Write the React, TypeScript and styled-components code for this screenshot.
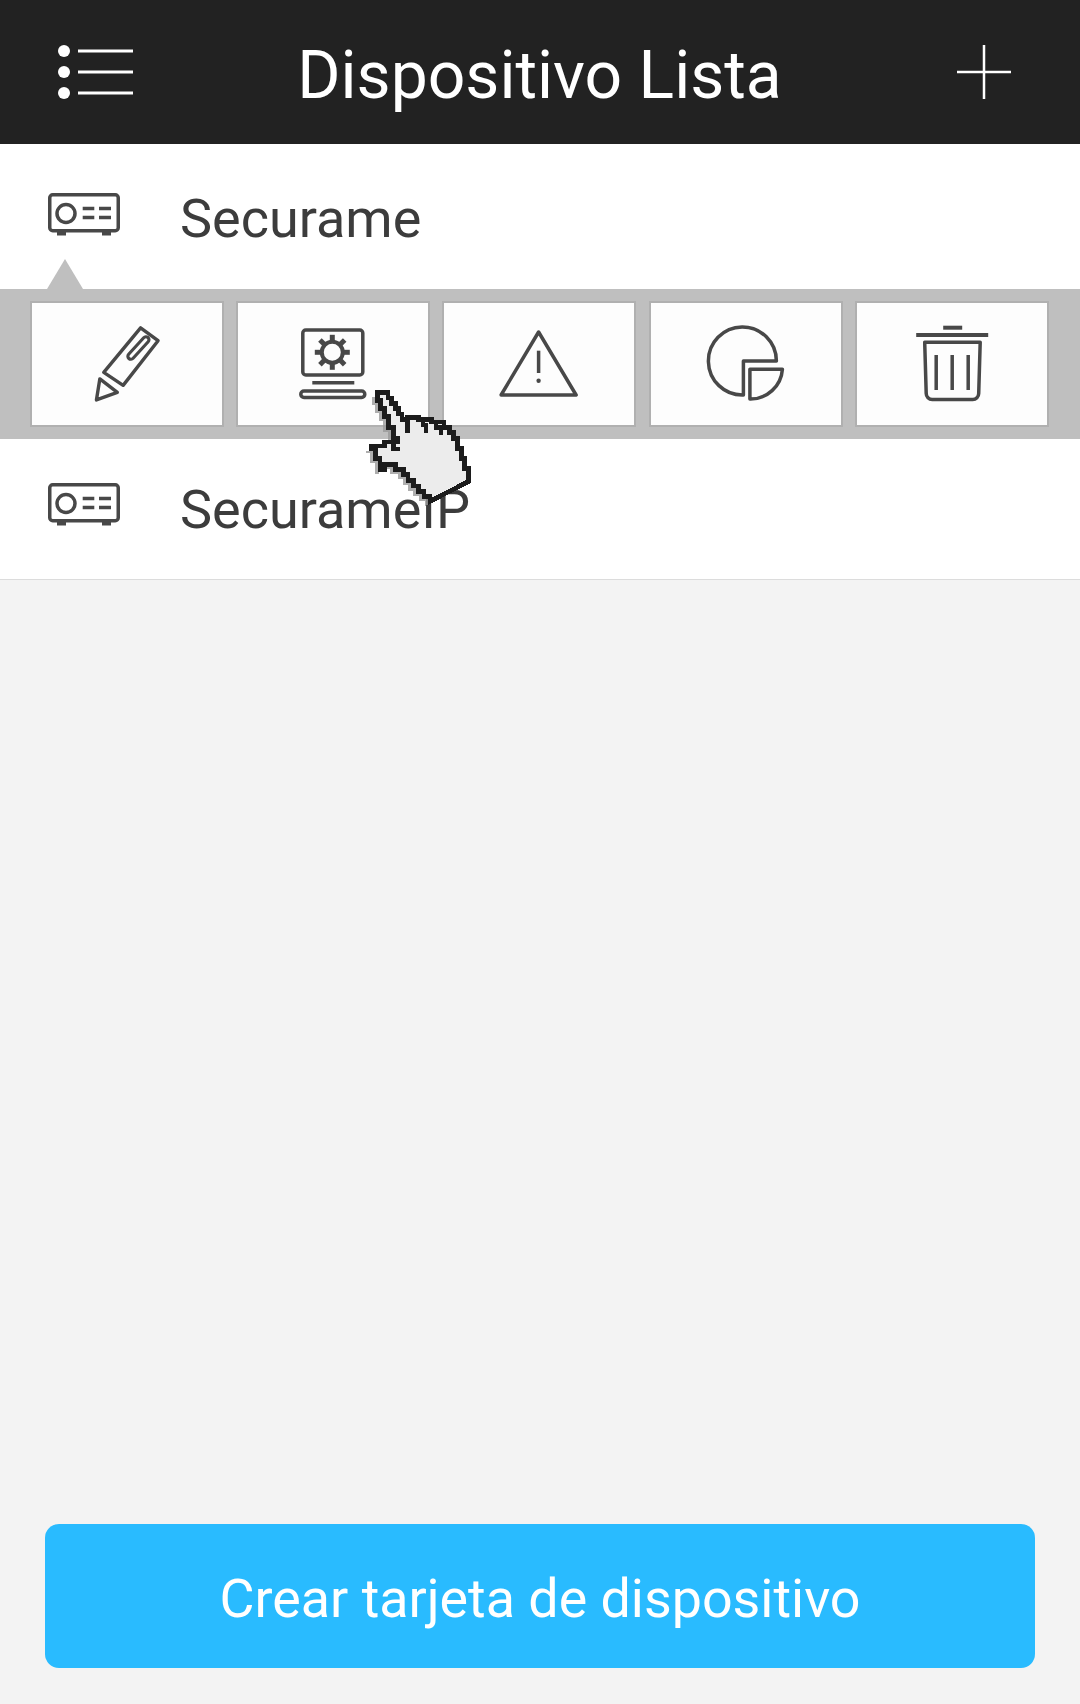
import styled, { createGlobalStyle } from "styled-components";

const GlobalStyle = createGlobalStyle`
  html, body {
    margin: 0;
    padding: 0;
    background: #f3f3f3;
  }
  * {
    box-sizing: border-box;
  }
`;

const gearTeeth = [0, 45, 90, 135, 180, 225, 270, 315];

const HAND_PATH =
  "M82 38 H114 V54 H125 V70 H136 V86 H146 V102 H156 V118 H172 V112 H205 V118 H245 V126 H282 V142 H298 V158 H310 V176 H322 V206 H334 V236 H344 V266 H356 V304 L240 364 V350 H222 V334 H206 V318 H190 V302 H174 V284 H160 V268 H136 V254 H104 V268 H90 V236 H76 V206 H64 V198 H104 V186 H142 V174 H130 V142 H116 V110 H104 V86 H92 V62 H82 Z";

function DeviceIcon() {
  return (
    <DeviceSvg viewBox="0 0 72 44" fill="none" stroke="#484848" strokeWidth="3.5">
      <rect x="1.75" y="1.75" width="68.5" height="36" rx="3" />
      <circle cx="18" cy="20.5" r="9" />
      <path d="M34.7 15.5h11.6M51 15.5h12M34.7 24.5h11.6M51 24.5h12" />
      <path d="M9 40.5h9M54 40.5h9" strokeWidth="4" />
    </DeviceSvg>
  );
}

function ToolIcon({ dx = 0, children }: { dx?: number; children: React.ReactNode }) {
  return (
    <ToolSvg
      viewBox={`${-45 - dx} -45 90 90`}
      fill="none"
      stroke="#484848"
      strokeWidth="3.5"
      strokeLinejoin="round"
    >
      {children}
    </ToolSvg>
  );
}

export default function App() {
  return (
    <Page>
      <GlobalStyle />
      <Header>
        <MenuSvg viewBox="0 0 80 54" fill="#fff" stroke="#fff">
          <circle cx="6" cy="6" r="6" stroke="none" />
          <circle cx="6" cy="27" r="6" stroke="none" />
          <circle cx="6" cy="48" r="6" stroke="none" />
          <path d="M20 6h55M20 27h55M20 48h55" strokeWidth="3" />
        </MenuSvg>
        <Title>Dispositivo Lista</Title>
        <PlusSvg viewBox="0 0 54 54" stroke="#fff" strokeWidth="2.5">
          <path d="M27 0v54M0 27h54" />
        </PlusSvg>
      </Header>

      <DeviceRow $height={145} $shift={5}>
        <DeviceIcon />
        <DeviceName>Securame</DeviceName>
      </DeviceRow>

      <Toolbar>
        <Arrow />
        <ToolButton>
          <ToolIcon dx={0.5}>
            <g transform="scale(0.97)">
              <path d="M13.5 -37.3L31.5 -24L-4.5 22L-24.5 8.7Z" />
              <path d="M-28.5 15.3L-10.5 29.3L-32 37Z" />
              <path d="M3.5 -8L19 -25" strokeWidth="9.5" strokeLinecap="round" />
              <path d="M3.5 -8L19 -25" stroke="#fdfdfd" strokeWidth="3" strokeLinecap="round" />
            </g>
          </ToolIcon>
        </ToolButton>
        <ToolButton>
          <ToolIcon dx={-0.7}>
            <rect x="-29.5" y="-34" width="60" height="45" rx="3" />
            <path d="M-20 18.7H22" />
            <rect x="-31.5" y="27" width="64" height="6.5" rx="3.2" />
            <g transform="translate(0 -11.7)">
              <circle r="10.5" strokeWidth="4" />
              {gearTeeth.map((a) => (
                <path key={a} d="M0 -11V-17.5" strokeWidth="5" transform={`rotate(${a})`} />
              ))}
            </g>
          </ToolIcon>
        </ToolButton>
        <ToolButton>
          <ToolIcon dx={-0.9}>
            <path d="M0.5 -32L38 31H-37Z" />
            <path d="M0.5 -13.3V9" />
            <circle cx="0.5" cy="16.7" r="2.2" fill="#484848" stroke="none" />
          </ToolIcon>
        </ToolButton>
        <ToolButton>
          <ToolIcon dx={-0.6}>
            <path d="M31 -3H-2V31A34 34 0 1 1 31 -3Z" />
            <path d="M4.5 5.3H37A32 32 0 0 1 4.5 35Z" />
          </ToolIcon>
        </ToolButton>
        <ToolButton>
          <ToolIcon dx={0.2}>
            <path d="M-9 -36.3H10" strokeWidth="4" />
            <path d="M-36 -29H36" strokeWidth="4" />
            <path d="M-27.5 -21.7H28L26.5 29.5A6 6 0 0 1 20.5 35.5H-20A6 6 0 0 1 -26 29.5Z" />
            <path d="M-16 -9V26M0 -9V26M16 -9V26" />
          </ToolIcon>
        </ToolButton>
      </Toolbar>

      <DeviceRow $height={141} $shift={1} $border>
        <DeviceIcon />
        <DeviceName>SecurameIP</DeviceName>
      </DeviceRow>

      <Footer>
        <CreateButton>Crear tarjeta de dispositivo</CreateButton>
      </Footer>

      <HandCursor viewBox="0 0 390 390" shapeRendering="crispEdges">
        <path d={HAND_PATH} fill="#9a9a9a" transform="translate(-16 14)" opacity="0.8" />
        <path d={HAND_PATH} fill="#ececec" stroke="#1c1c1c" strokeWidth="14" strokeLinejoin="miter" />
        <path
          d="M172 114 V158 M205 118 H218 V134 H228 V160 M245 126 H258 V142 H272 V164 M104 186 H130 V206 H150 M104 254 H136"
          fill="none"
          stroke="#1c1c1c"
          strokeWidth="13"
        />
      </HandCursor>
    </Page>
  );
}

const Page = styled.div`
  position: relative;
  width: 1080px;
  height: 1704px;
  display: flex;
  flex-direction: column;
  background: #f3f3f3;
  overflow: hidden;
  font-family: Roboto, "Liberation Sans", sans-serif;
`;

const Header = styled.header`
  height: 144px;
  flex: none;
  display: grid;
  grid-template-columns: 1fr auto 1fr;
  align-items: center;
  padding: 0 69px 0 58px;
  background: #222222;
`;

const MenuSvg = styled.svg`
  width: 80px;
  height: 54px;
`;

const PlusSvg = styled.svg`
  width: 54px;
  height: 54px;
  justify-self: end;
`;

const Title = styled.h1`
  margin: 7px 0 0 10px;
  font-size: 66px;
  line-height: 76px;
  font-weight: 400;
  color: #ffffff;
`;

const DeviceRow = styled.div<{ $height: number; $shift: number; $border?: boolean }>`
  height: ${(p) => p.$height}px;
  flex: none;
  display: flex;
  align-items: center;
  gap: 60px;
  padding: ${(p) => p.$shift}px 0 0 48px;
  background: #ffffff;
  border-bottom: ${(p) => (p.$border ? "1px solid #dcdcdc" : "none")};
`;

const DeviceSvg = styled.svg`
  width: 72px;
  height: 44px;
  flex: none;
  margin-bottom: 9px;
`;

const DeviceName = styled.span`
  font-size: 54px;
  line-height: 60px;
  color: #3c3c3c;
`;

const Toolbar = styled.div`
  position: relative;
  height: 150px;
  flex: none;
  display: flex;
  align-items: center;
  gap: 12.2px;
  padding: 0 30px;
  background: #bfbfbf;
`;

const Arrow = styled.div`
  position: absolute;
  left: 47px;
  bottom: 100%;
  width: 0;
  height: 0;
  border-left: 18.5px solid transparent;
  border-right: 18.5px solid transparent;
  border-bottom: 30px solid #bfbfbf;
`;

const ToolButton = styled.div`
  width: 194px;
  height: 126px;
  flex: none;
  display: flex;
  align-items: center;
  justify-content: center;
  background: #fdfdfd;
  border: 2px solid #b0b0b0;
`;

const ToolSvg = styled.svg`
  width: 90px;
  height: 90px;
`;

const Footer = styled.div`
  flex: 1;
  display: flex;
  align-items: flex-end;
  padding: 0 45px 36px;
`;

const CreateButton = styled.button`
  width: 100%;
  height: 144px;
  padding: 4px 0 0;
  border: none;
  border-radius: 14px;
  background: #29bbff;
  font-family: inherit;
  font-size: 53.8px;
  color: #ffffff;
`;

const HandCursor = styled.svg`
  position: absolute;
  left: 350px;
  top: 380px;
  width: 130px;
  height: 130px;
`;
